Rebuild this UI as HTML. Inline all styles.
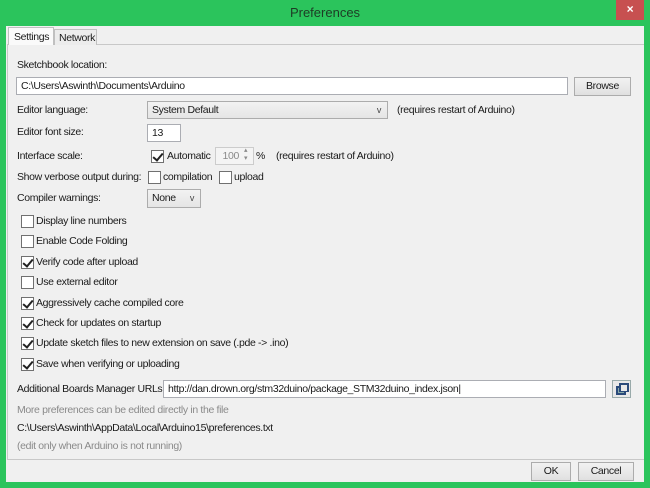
<!DOCTYPE html>
<html><head><style>
*{box-sizing:border-box;margin:0;padding:0}
body{width:650px;height:488px;background:#2bc45c;position:relative;overflow:hidden;font-family:"Liberation Sans",sans-serif;font-size:10.5px;letter-spacing:-0.35px;color:#1a1a1a}
.a{position:absolute;white-space:nowrap}
.t{position:absolute;white-space:nowrap;line-height:13px}
.in{position:absolute;background:#fff;border:1px solid #abadb3;padding-left:4px;line-height:17px}
.btn{position:absolute;background:linear-gradient(#f2f2f2,#e0e0e0);border:1px solid #acacac;text-align:center;line-height:17px}
.cb{position:absolute;width:13px;height:13px;background:#fff;border:1px solid #707070}
.ck::after{content:"";position:absolute;left:3px;top:0px;width:4px;height:8px;border:solid #222;border-width:0 2px 2px 0;transform:rotate(40deg)}
.sel{position:absolute;background:linear-gradient(#f2f2f2,#e5e5e5);border:1px solid #acacac;padding-left:4px;line-height:17px}
.arr{position:absolute;right:6px;top:0;font-size:9px;color:#444}
.g{color:#8a8a8a}
</style></head><body>
<div class="a" style="left:0;top:5px;width:650px;text-align:center;font-size:13px;letter-spacing:0;color:#1e3b25">Preferences</div>
<div class="a" style="left:616px;top:0;width:28px;height:20px;background:#c75050;color:#fff;text-align:center;font-size:12px;line-height:19px;font-weight:bold">×</div>
<div class="a" style="left:6px;top:26px;width:638px;height:456px;background:#f0f0f0"></div>
<div class="a" style="left:7px;top:44px;width:637px;height:416px;border:1px solid #c8c8c8;border-right:none;background:#f0f0f0"></div>
<div class="a" style="left:8px;top:27px;width:46px;height:18px;background:#fafafa;border:1px solid #c0c0c0;border-bottom:none;padding:3px 0 0 5px">Settings</div>
<div class="a" style="left:54px;top:29px;width:43px;height:16px;background:#ececec;border:1px solid #c0c0c0;border-bottom:none;padding:2px 0 0 4px">Network</div>

<div class="t" style="left:17px;top:59px">Sketchbook location:</div>
<div class="in" style="left:16px;top:77px;width:552px;height:18px">C:\Users\Aswinth\Documents\Arduino</div>
<div class="btn" style="left:574px;top:77px;width:57px;height:19px">Browse</div>

<div class="t" style="left:17px;top:104px">Editor language:</div>
<div class="sel" style="left:147px;top:101px;width:241px;height:18px">System Default<span class="arr">v</span></div>
<div class="t" style="left:397px;top:104px">(requires restart of Arduino)</div>

<div class="t" style="left:17px;top:126px">Editor font size:</div>
<div class="in" style="left:147px;top:124px;width:34px;height:18px">13</div>

<div class="t" style="left:17px;top:150px">Interface scale:</div>
<div class="cb ck" style="left:151px;top:150px"></div>
<div class="t" style="left:167px;top:150px">Automatic</div>
<div class="in g" style="left:215px;top:147px;width:39px;height:18px;background:#f4f4f4;border-color:#ccc;text-align:right;padding-right:14px">100</div>
<div class="a g" style="left:244px;top:147px;font-size:7px;line-height:8px">▴<br>▾</div>
<div class="t" style="left:256px;top:150px">%</div>
<div class="t" style="left:276px;top:150px">(requires restart of Arduino)</div>

<div class="t" style="left:17px;top:171px">Show verbose output during:</div>
<div class="cb" style="left:148px;top:171px"></div>
<div class="t" style="left:163px;top:171px">compilation</div>
<div class="cb" style="left:219px;top:171px"></div>
<div class="t" style="left:234px;top:171px">upload</div>

<div class="t" style="left:17px;top:192px">Compiler warnings:</div>
<div class="sel" style="left:147px;top:189px;width:54px;height:19px">None<span class="arr">v</span></div>

<div class="cb" style="left:21px;top:215px"></div><div class="t" style="left:36px;top:215px">Display line numbers</div>
<div class="cb" style="left:21px;top:235px"></div><div class="t" style="left:36px;top:235px">Enable Code Folding</div>
<div class="cb ck" style="left:21px;top:256px"></div><div class="t" style="left:36px;top:256px">Verify code after upload</div>
<div class="cb" style="left:21px;top:276px"></div><div class="t" style="left:36px;top:276px">Use external editor</div>
<div class="cb ck" style="left:21px;top:297px"></div><div class="t" style="left:36px;top:297px">Aggressively cache compiled core</div>
<div class="cb ck" style="left:21px;top:317px"></div><div class="t" style="left:36px;top:317px">Check for updates on startup</div>
<div class="cb ck" style="left:21px;top:337px"></div><div class="t" style="left:36px;top:337px">Update sketch files to new extension on save (.pde -&gt; .ino)</div>
<div class="cb ck" style="left:21px;top:358px"></div><div class="t" style="left:36px;top:358px">Save when verifying or uploading</div>

<div class="t" style="left:17px;top:383px">Additional Boards Manager URLs:</div>
<div class="in" style="left:163px;top:380px;width:443px;height:18px">http://dan.drown.org/stm32duino/package_STM32duino_index.json|</div>
<div class="a" style="left:612px;top:380px;width:19px;height:18px;background:#e8e8e8;border:1px solid #9aa">
<div class="a" style="left:3px;top:5px;width:10px;height:9px;border:2px solid #2a4a7a;background:#8aa"></div>
<div class="a" style="left:6px;top:2px;width:10px;height:9px;border:2px solid #2a4a7a;border-bottom-width:1px;background:#e8e8e8"></div>
</div>

<div class="t g" style="left:17px;top:404px">More preferences can be edited directly in the file</div>
<div class="t" style="left:17px;top:422px">C:\Users\Aswinth\AppData\Local\Arduino15\preferences.txt</div>
<div class="t g" style="left:17px;top:440px">(edit only when Arduino is not running)</div>

<div class="btn" style="left:531px;top:462px;width:40px;height:19px">OK</div>
<div class="btn" style="left:578px;top:462px;width:56px;height:19px">Cancel</div>
</body></html>
